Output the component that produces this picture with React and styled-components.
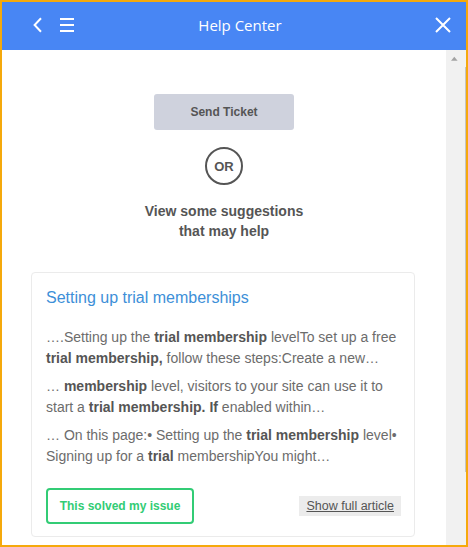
import React from "react";
import styled, { createGlobalStyle } from "styled-components";

const Global = createGlobalStyle`
  html, body { margin: 0; padding: 0; background: #fff; }
  * { box-sizing: border-box; }
`;

const Frame = styled.div`
  width: 468px;
  height: 547px;
  border: 2px solid #f5a90c;
  display: flex;
  flex-direction: column;
  overflow: hidden;
  font-family: "Liberation Sans", Arial, sans-serif;
`;

const Header = styled.header`
  height: 48px;
  flex: none;
  background: #4886f4;
  display: grid;
  grid-template-columns: 1fr auto 1fr;
  align-items: center;
  padding-bottom: 3px;
  color: #fff;
`;

const HeaderLeft = styled.div`
  display: flex;
  align-items: center;
  gap: 18px;
  padding-left: 30px;
`;

const HeaderRight = styled.div`
  display: flex;
  justify-content: flex-end;
  align-items: center;
  padding-right: 15px;
`;

const Title = styled.h1`
  margin: 0 0 0 12px;
  font-family: "Open Sans", "Noto Sans", sans-serif;
  font-size: 15px;
  font-weight: 500;
  line-height: 20px;
  color: #fff;
`;

const IconSvg = styled.svg`
  display: block;
  flex: none;
`;

const Body = styled.div`
  flex: 1;
  min-height: 0;
  display: flex;
`;

const Content = styled.main`
  flex: 1;
  min-width: 0;
  overflow: hidden;
  display: flex;
  flex-direction: column;
  align-items: center;
  padding-top: 44px;
`;

const Scrollbar = styled.div`
  width: 20px;
  flex: none;
  background: #f1f1f1;
  display: flex;
  flex-direction: column;
`;

const ScrollArrow = styled.div`
  width: 17px;
  height: 17px;
  flex: none;
`;

const ScrollThumb = styled.div`
  align-self: flex-end;
  width: 1.5px;
  height: 405px;
  background: #c4c4c4;
`;

const SendButton = styled.button`
  width: 140px;
  height: 36px;
  border: none;
  border-radius: 3px;
  background: #cfd2dd;
  color: #555;
  font-family: "Liberation Sans", Arial, sans-serif;
  font-weight: bold;
  font-size: 12px;
  padding: 0;
`;

const OrCircle = styled.div`
  margin-top: 17px;
  width: 38px;
  height: 38px;
  border: 2px solid #555;
  border-radius: 50%;
  display: flex;
  align-items: center;
  justify-content: center;
  font-weight: bold;
  font-size: 13px;
  color: #555;
`;

const Suggest = styled.p`
  margin: 16px 0 0;
  text-align: center;
  font-weight: bold;
  font-size: 14px;
  line-height: 20px;
  color: #555;
`;

const Card = styled.article`
  align-self: stretch;
  margin: 31px 31px 0 29px;
  border: 1px solid #ebebeb;
  border-radius: 4px;
  padding: 15px 14px 12px 14px;
`;

const CardTitle = styled.h2`
  margin: 0 0 19px;
  font-weight: normal;
  font-size: 16px;
  line-height: 20px;
  color: #3d8fd8;
`;

const Snippet = styled.p`
  margin: 0 0 7px;
  font-size: 14px;
  line-height: 21px;
  color: #6c6c6c;

  b {
    color: #555;
  }
`;

const Actions = styled.div`
  margin-top: 21px;
  display: flex;
  justify-content: space-between;
  align-items: center;
`;

const SolvedButton = styled.button`
  width: 148px;
  height: 36px;
  border: 2px solid #32cc75;
  border-radius: 4px;
  background: #fff;
  color: #32cc75;
  font-family: "Liberation Sans", Arial, sans-serif;
  font-weight: bold;
  font-size: 12px;
  padding: 0;
`;

const FullLink = styled.a`
  display: block;
  height: 20px;
  line-height: 20px;
  padding: 0 7px;
  margin-right: -1px;
  background: #ececec;
  color: #555;
  font-size: 12.5px;
  text-decoration: underline;
`;

export default function App() {
  return (
    <>
      <Global />
      <Frame>
        <Header>
          <HeaderLeft>
            <IconSvg width="10" height="16" viewBox="0 0 10 16">
              <path d="M9 1.2 L2.6 8 L9 14.8" fill="none" stroke="#fff" strokeWidth="2" />
            </IconSvg>
            <IconSvg width="14" height="14" viewBox="0 0 14 14">
              <rect x="0" y="0" width="14" height="2" fill="#fff" />
              <rect x="0" y="6" width="14" height="2" fill="#fff" />
              <rect x="0" y="12" width="14" height="2" fill="#fff" />
            </IconSvg>
          </HeaderLeft>
          <Title>Help Center</Title>
          <HeaderRight>
            <IconSvg width="16" height="16" viewBox="0 0 16 16">
              <path d="M1 1 L15 15 M15 1 L1 15" fill="none" stroke="#fff" strokeWidth="2" />
            </IconSvg>
          </HeaderRight>
        </Header>
        <Body>
          <Content>
            <SendButton>Send Ticket</SendButton>
            <OrCircle>OR</OrCircle>
            <Suggest>
              View some suggestions
              <br />
              that may help
            </Suggest>
            <Card>
              <CardTitle>Setting up trial memberships</CardTitle>
              <Snippet>
                ….Setting up the <b>trial membership</b> levelTo set up a free <b>trial membership,</b> follow these steps:Create a new…
              </Snippet>
              <Snippet>
                … <b>membership</b> level, visitors to your site can use it to start a <b>trial membership. If</b> enabled within…
              </Snippet>
              <Snippet>
                … On this page:• Setting up the <b>trial membership</b> level• Signing up for a <b>trial</b> membershipYou might…
              </Snippet>
              <Actions>
                <SolvedButton>This solved my issue</SolvedButton>
                <FullLink>Show full article</FullLink>
              </Actions>
            </Card>
          </Content>
          <Scrollbar>
            <ScrollArrow>
              <IconSvg width="17" height="17" viewBox="0 0 17 17">
                <polygon points="5,10.7 11.6,10.7 8.3,6.7" fill="#a3a3a3" />
              </IconSvg>
            </ScrollArrow>
            <ScrollThumb />
          </Scrollbar>
        </Body>
      </Frame>
    </>
  );
}
